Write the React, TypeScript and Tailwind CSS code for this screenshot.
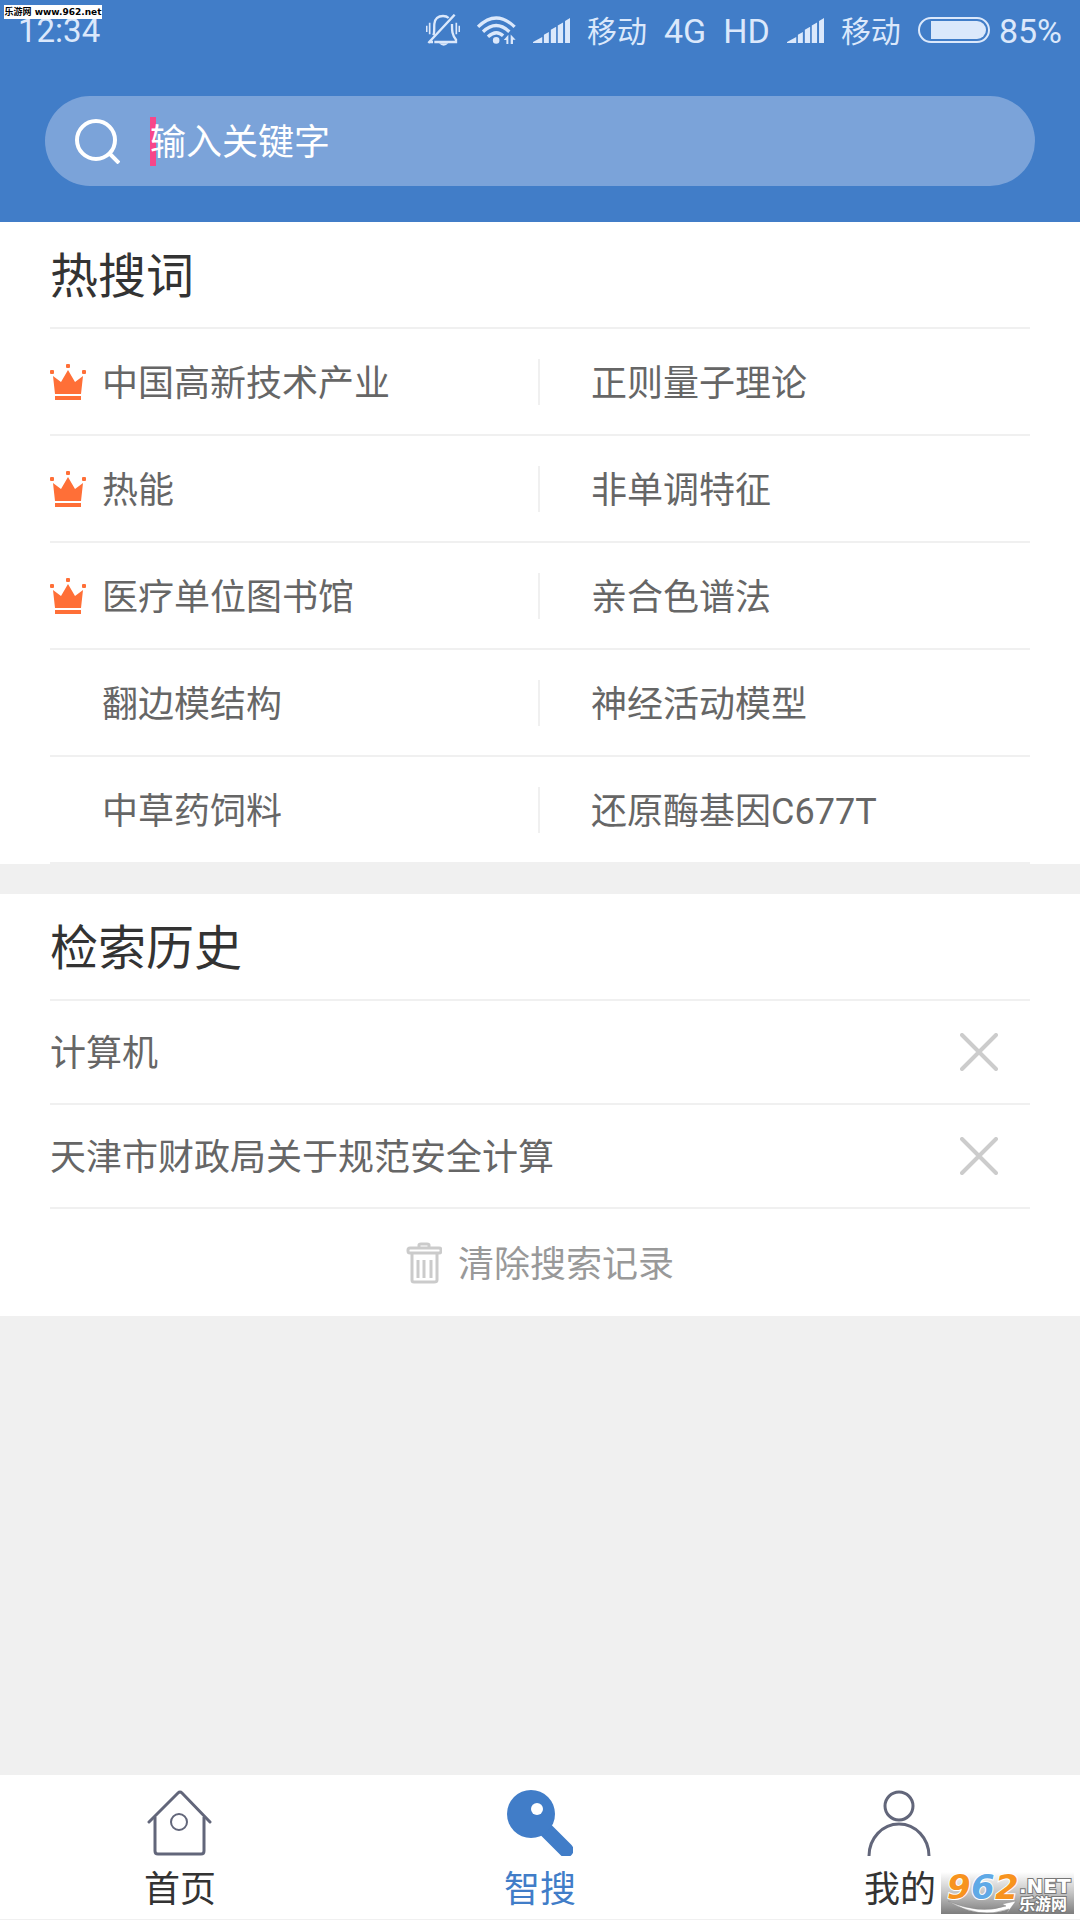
import React, { useState } from 'react';

const hotWords = [
    { left: '中国高新技术产业', right: '正则量子理论', top: true },
    { left: '热能', right: '非单调特征', top: true },
    { left: '医疗单位图书馆', right: '亲合色谱法', top: true },
    { left: '翻边模结构', right: '神经活动模型', top: false },
    { left: '中草药饲料', right: '还原酶基因C677T', top: false },
];

function MuteIcon() {
    return (
        <svg viewBox="75 40 102 96" className="w-[34px] h-8" fill="none" stroke="currentColor" strokeWidth="7">
            <path d="M97 104 C101 96 99 84 100 70 C101 54 112 46 126 46 C133 46 139 48 143 52" />
            <path d="M153 70 C153 88 152 100 165 117 V124 H100" />
            <path d="M161 42 L82 127 M84 124 H96" />
            <path d="M77 75 V94 M86 66 V101 M166 66 V101 M175 75 V94" strokeWidth="5" />
            <path d="M114 128 H142 Q128 142 114 128Z" fill="currentColor" stroke="none" />
        </svg>
    );
}

function WifiIcon() {
    return (
        <svg viewBox="227 46 118 88" className="w-[39px] h-[29px]" fill="none" stroke="currentColor" strokeWidth="10">
            <path d="M230 79 Q285 25 341 79" />
            <path d="M245 94 Q285 56 325 94" />
            <path d="M260 109 Q285 86 306 106" />
            <circle cx="285" cy="120" r="10" fill="currentColor" stroke="none" />
            <path d="M322 103 V131 H316 V119 H308 Z M329 131 V102 L344 118 H336 V131Z" fill="currentColor" stroke="none" />
        </svg>
    );
}

function SignalIcon() {
    return (
        <svg viewBox="140 54 112 75" className="w-[37px] h-[25px]" fill="currentColor">
            <path d="M140 129 V126 L168 111 V129Z M173 129 V104 L188 96 V129Z M194 129 V89 L210 80 V129Z M215 129 V76 L231 67 V129Z M237 129 V63 L252 54 V129Z" />
        </svg>
    );
}

function BatteryIcon() {
    return (
        <svg viewBox="0 0 72 26" className="w-[72px] h-[26px]" fill="none">
            <rect x="1" y="1" width="70" height="24" rx="12" stroke="currentColor" strokeWidth="2" />
            <path d="M13 4 H59 A9 9 0 0 1 59 22 H13Z" fill="currentColor" />
        </svg>
    );
}

function CrownIcon() {
    return (
        <svg viewBox="0 0 36 36" className="w-9 h-9" fill="#ff6f37">
            <path d="M3 12 L11 18 L18 6 L25 18 L33 12 L31 30 H5Z" />
            <path d="M5 32 H31 V36 H5Z" />
            <rect x="16" y="0" width="4" height="4" rx="1" />
            <rect x="0" y="6" width="4" height="4" rx="1" />
            <rect x="32" y="6" width="4" height="4" rx="1" />
        </svg>
    );
}

function TrashIcon() {
    return (
        <svg viewBox="0 0 36 42" className="w-9 h-[42px]" fill="none" stroke="#cbcbcb" strokeWidth="3">
            <path d="M13 5 V3 Q13 2 15 2 H21 Q23 2 23 3 V5" />
            <rect x="2" y="6" width="33" height="5" rx="2" />
            <path d="M6 11 V38 Q6 40 8 40 H28 Q31 40 31 38 V11" />
            <path d="M12 18 V36 M18 18 V36 M25 18 V36" />
        </svg>
    );
}

function HomeIcon() {
    return (
        <svg viewBox="0 0 66 66" className="w-[66px] h-[66px]" fill="none" stroke="#62667a" strokeWidth="3">
            <path d="M2 32 L31 3 Q33 1 35 3 L63 32" strokeLinecap="round" />
            <path d="M8 27 V61 Q8 64 11 64 H54 Q57 64 57 61 V27" />
            <circle cx="32" cy="32" r="8" strokeWidth="2" />
        </svg>
    );
}

function SmartIcon() {
    return (
        <svg viewBox="0 0 66 66" className="w-[66px] h-[66px]">
            <path d="M36 37 L59 60" stroke="#417dc8" strokeWidth="15" strokeLinecap="round" />
            <circle cx="24" cy="24" r="24" fill="#417dc8" />
            <circle cx="30" cy="19" r="6" fill="#fff" />
        </svg>
    );
}

function UserIcon() {
    return (
        <svg viewBox="0 0 66 66" className="w-[66px] h-[66px]" fill="none" stroke="#62667a" strokeWidth="3">
            <circle cx="32" cy="16" r="14" />
            <path d="M2 66 A30 32 0 0 1 62 66" />
        </svg>
    );
}

function SiteLogo() {
    return (
        <svg viewBox="0 0 133 42" className="w-[133px] h-[42px] overflow-visible">
            <defs>
                <linearGradient id="logoBg" x1="0" y1="0" x2="0" y2="1">
                    <stop offset="0" stopColor="#ffffff" />
                    <stop offset="0.5" stopColor="#c4c4c4" />
                    <stop offset="1" stopColor="#7d7d7d" />
                </linearGradient>
            </defs>
            <rect width="133" height="42" fill="url(#logoBg)" />
            <path d="M7 29 Q38 48 68 37 L66 41 L75 29 L61 32 L65 34 Q38 43 7 29Z" fill="#fff" stroke="#8a8a8a" strokeWidth="0.5" />
            <g className="font-['DejaVu_Sans'] font-bold italic" fontSize="34" stroke="#fff" strokeWidth="2" paintOrder="stroke">
                <text x="6" y="27" fill="#f7931e">9</text>
                <text x="30" y="27" fill="#5fa9e6">6</text>
                <text x="54" y="27" fill="#f7931e">2</text>
            </g>
            <g fill="#fff" stroke="#777" strokeWidth="2" paintOrder="stroke" className="font-bold">
                <text x="78" y="21" fontSize="20" className="font-['DejaVu_Sans']">.NET</text>
                <text x="78" y="38" fontSize="16" className="font-['Noto_Sans_CJK_SC']">乐游网</text>
            </g>
        </svg>
    );
}

function SectionTitle({ children }: { children: React.ReactNode }) {
    return (
        <h2 className="h-[107px] pt-1 flex items-center border-b-2 border-[#f0f0f0] text-5xl leading-none text-[#333]">
            {children}
        </h2>
    );
}

export default function App() {
    const [keyword, setKeyword] = useState('');
    const [history, setHistory] = useState(['计算机', '天津市财政局关于规范安全计算']);

    return (
        <div className="relative min-h-screen flex flex-col bg-[#f0f0f0] text-4xl leading-none text-[#666] font-['Roboto','Noto_Sans_CJK_SC',sans-serif]">
            <div className="absolute left-1 top-[5px] h-3.5 w-[98px] flex items-center justify-center bg-white text-[9px] font-bold text-black whitespace-nowrap font-['DejaVu_Sans','Noto_Sans_CJK_SC',sans-serif]">
                乐游网 www.962.net
            </div>

            <header className="bg-[#417dc8] pb-9">
                {/* Status bar */}
                <div className="h-[60px] px-[18px] flex items-center justify-between text-[34px] text-[#dbe8fb]">
                    <span className="text-[33px]">12:34</span>
                    <div className="flex items-center gap-[17px]">
                        <MuteIcon />
                        <WifiIcon />
                        <SignalIcon />
                        <span className="pt-1 text-3xl leading-none">移动</span>
                        <span className="pt-0.5">4G</span>
                        <span className="pt-0.5">HD</span>
                        <SignalIcon />
                        <span className="pt-1 text-3xl leading-none">移动</span>
                        <div className="flex items-center gap-[9px]">
                            <BatteryIcon />
                            <span className="pt-0.5">85%</span>
                        </div>
                    </div>
                </div>

                {/* Search box */}
                <div className="mx-[45px] mt-9 h-[90px] pl-[30px] pr-10 flex items-center gap-[30px] rounded-full bg-[#7ba3d9]">
                    <svg viewBox="0 0 45 45" className="w-[45px] h-[45px] shrink-0" fill="none" stroke="#fff" strokeWidth="4">
                        <circle cx="21" cy="21" r="19" />
                        <path d="M34 34 L44 44" />
                    </svg>
                    <div className="relative flex-1 flex items-center">
                        <span className="absolute left-0 w-1.5 h-[49px] bg-[#f7468a]" />
                        <input
                            type="text"
                            aria-label="搜索"
                            value={keyword}
                            onChange={(e) => setKeyword(e.target.value)}
                            placeholder="输入关键字"
                            className="relative w-full h-14 pt-1 bg-transparent text-white placeholder:text-white outline-none caret-[#f7468a]"
                        />
                    </div>
                </div>
            </header>

            <main className="flex-1 flex flex-col gap-[30px]">
                <section className="bg-white px-[50px]">
                    <SectionTitle>热搜词</SectionTitle>
                    {hotWords.map((row) => (
                        <div key={row.left} className="h-[107px] grid grid-cols-2 items-center border-b-2 border-[#f0f0f0]">
                            <button type="button" className="h-[46px] flex items-center gap-4 border-r-2 border-[#f0f0f0] text-left">
                                <span className="w-9 shrink-0">{row.top && <CrownIcon />}</span>
                                <span className="pt-1">{row.left}</span>
                            </button>
                            <button type="button" className="pl-[51px] pt-1 text-left">
                                {row.right}
                            </button>
                        </div>
                    ))}
                </section>

                <section className="bg-white px-[50px]">
                    <SectionTitle>检索历史</SectionTitle>
                    {history.map((item) => (
                        <div key={item} className="h-[104px] pr-8 flex items-center justify-between border-b-2 border-[#f0f0f0]">
                            <a href="#search" className="pt-1">{item}</a>
                            <button
                                type="button"
                                aria-label={`删除 ${item}`}
                                onClick={() => setHistory(history.filter((h) => h !== item))}
                            >
                                <svg viewBox="0 0 38 38" className="w-[38px] h-[38px]" stroke="#ccc" strokeWidth="4" strokeLinecap="round">
                                    <path d="M2 2 L36 36 M36 2 L2 36" />
                                </svg>
                            </button>
                        </div>
                    ))}
                    <button
                        type="button"
                        onClick={() => setHistory([])}
                        className="w-full h-[107px] flex items-center justify-center gap-4 text-[#999]"
                    >
                        <TrashIcon />
                        <span className="pt-1">清除搜索记录</span>
                    </button>
                </section>
            </main>

            {/* Bottom tabs */}
            <nav className="h-[145px] pt-[15px] grid grid-cols-3 bg-white border-b border-[#f0f0f0] text-[#333]">
                <a href="#home" className="flex flex-col items-center gap-4">
                    <HomeIcon />
                    首页
                </a>
                <a href="#smart" className="flex flex-col items-center gap-4 text-[#417dc8]">
                    <SmartIcon />
                    智搜
                </a>
                <a href="#mine" className="flex flex-col items-center gap-4">
                    <UserIcon />
                    我的
                </a>
            </nav>

            <div className="absolute right-1.5 bottom-1.5">
                <SiteLogo />
            </div>
        </div>
    );
}
